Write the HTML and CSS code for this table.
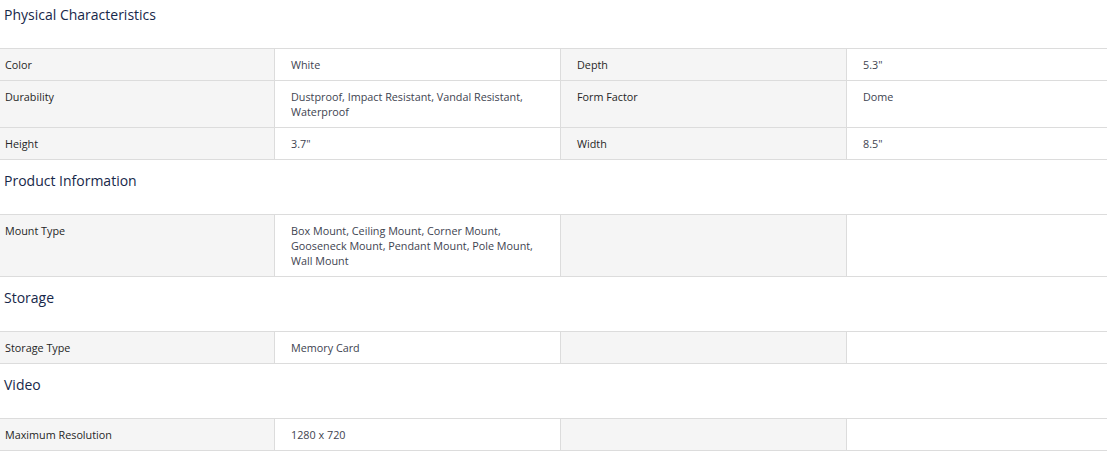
FILE: index.html
```html
<!DOCTYPE html>
<html lang="en">
<head>
<meta charset="utf-8">
<title>Specifications</title>
<link rel="stylesheet" href="styles.css">
</head>
<body>
<div class="specs">
  <section class="group">
    <h3 class="group-title">Physical Characteristics</h3>
    <div class="grid">
      <div class="cell label">Color</div>
      <div class="cell value">White</div>
      <div class="cell label">Depth</div>
      <div class="cell value">5.3"</div>
      <div class="cell label">Durability</div>
      <div class="cell value">Dustproof, Impact Resistant, Vandal Resistant, Waterproof</div>
      <div class="cell label">Form Factor</div>
      <div class="cell value">Dome</div>
      <div class="cell label">Height</div>
      <div class="cell value">3.7"</div>
      <div class="cell label">Width</div>
      <div class="cell value">8.5"</div>
    </div>
  </section>
  <section class="group">
    <h3 class="group-title">Product Information</h3>
    <div class="grid">
      <div class="cell label">Mount Type</div>
      <div class="cell value">Box Mount, Ceiling Mount, Corner Mount, Gooseneck Mount, Pendant Mount, Pole Mount, Wall Mount</div>
      <div class="cell label"></div>
      <div class="cell value"></div>
    </div>
  </section>
  <section class="group">
    <h3 class="group-title">Storage</h3>
    <div class="grid">
      <div class="cell label">Storage Type</div>
      <div class="cell value">Memory Card</div>
      <div class="cell label"></div>
      <div class="cell value"></div>
    </div>
  </section>
  <section class="group">
    <h3 class="group-title">Video</h3>
    <div class="grid">
      <div class="cell label">Maximum Resolution</div>
      <div class="cell value">1280 x 720</div>
      <div class="cell label"></div>
      <div class="cell value"></div>
    </div>
  </section>
</div>
</body>
</html>
```
FILE: styles.css
```css
* { box-sizing: border-box; }
html, body { margin: 0; padding: 0; background: #fff; }
body {
  font-family: "Open Sans", "Noto Sans", Arial, sans-serif;
  color: #333;
}
.specs { display: flex; flex-direction: column; }
.group-title {
  margin: 0;
  height: 55px;
  padding: 12px 0 0 4px;
  font-size: 14px;
  font-weight: 400;
  line-height: 18px;
  color: #17284a;
  border-bottom: 1px solid #dcdcdc;
}
.group:first-child .group-title { height: 49px; padding-top: 6px; }
.grid {
  display: grid;
  grid-template-columns: 275px 286px 286px 1fr;
}
.cell {
  padding: 8px 16px;
  font-size: 10.8px;
  line-height: 15px;
  border-bottom: 1px solid #dcdcdc;
  min-height: 32px;
}
.cell.label {
  background: #f5f5f5;
  color: #262626;
  border-right: 1px solid #dcdcdc;
}
.cell.label:nth-child(4n+1) { padding-left: 5px; }
.cell.value {
  color: #3e4350;
  border-right: 1px solid #dcdcdc;
}
.cell.value:nth-child(4n) { border-right: 0; }
```
